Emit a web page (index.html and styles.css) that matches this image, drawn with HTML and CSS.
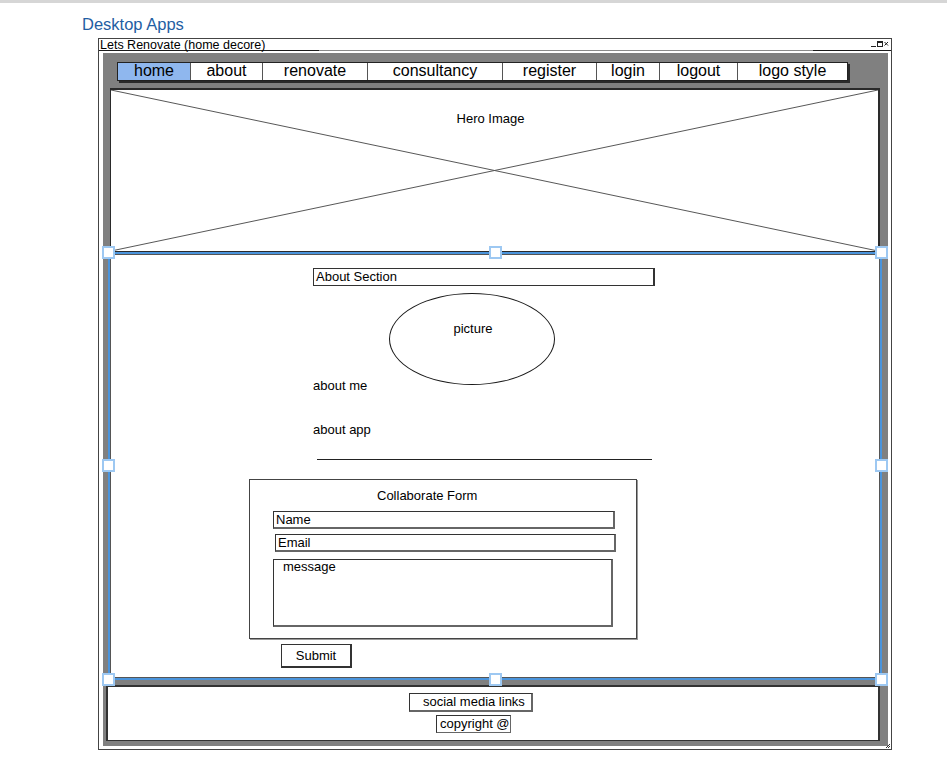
FILE: index.html
```html
<!DOCTYPE html>
<html>
<head>
<meta charset="utf-8">
<link rel="stylesheet" href="styles.css">
</head>
<body>
<div class="topbar"></div>
<div class="page">
  <h1 class="heading">Desktop Apps</h1>
  <div class="window">
    <div class="titlebar">
      <span class="title">Lets Renovate (home decore)</span>
      <svg class="controls" width="18" height="8" viewBox="0 0 18 8">
        <rect x="0" y="6" width="5" height="1" fill="#222"/>
        <rect x="6.5" y="1.5" width="5" height="5" fill="none" stroke="#222" stroke-width="1"/>
        <rect x="6" y="1" width="6" height="2" fill="#222"/>
        <path d="M13.5 2 L17 5.5 M17 2 L13.5 5.5" stroke="#222" stroke-width="1"/>
      </svg>
    </div>
    <div class="canvas">
      <nav class="nav">
        <span class="nav-item active">home</span>
        <span class="nav-item">about</span>
        <span class="nav-item">renovate</span>
        <span class="nav-item">consultancy</span>
        <span class="nav-item">register</span>
        <span class="nav-item">login</span>
        <span class="nav-item">logout</span>
        <span class="nav-item">logo style</span>
      </nav>
      <div class="hero">
        <svg class="hero-x" viewBox="0 0 770 164" preserveAspectRatio="none">
          <line x1="0" y1="0" x2="770" y2="164" stroke="#555" stroke-width="1"/>
          <line x1="770" y1="0" x2="0" y2="164" stroke="#555" stroke-width="1"/>
        </svg>
        <span class="hero-label">Hero Image</span>
      </div>
      <section class="main">
        <span class="handle h-tl"></span>
        <span class="handle h-tc"></span>
        <span class="handle h-tr"></span>
        <span class="handle h-ml"></span>
        <span class="handle h-mr"></span>
        <span class="handle h-bl"></span>
        <span class="handle h-bc"></span>
        <span class="handle h-br"></span>
        <div class="about-box">About Section</div>
        <div class="picture"><span>picture</span></div>
        <div class="about-me">about me</div>
        <div class="about-app">about app</div>
        <div class="rule"></div>
        <div class="form">
          <div class="form-title">Collaborate Form</div>
          <div class="field f-name">Name</div>
          <div class="field f-email">Email</div>
          <div class="field f-message">message</div>
        </div>
        <div class="submit">Submit</div>
      </section>
      <footer class="footer">
        <div class="social">social media links</div>
        <div class="copyright">copyright @</div>
      </footer>
    </div>
    <svg class="grip" width="6" height="6" viewBox="0 0 6 6">
      <path d="M1 5 L5 1 M3 5 L5 3" stroke="#333" stroke-width="1"/>
    </svg>
  </div>
</div>
</body>
</html>
```
FILE: styles.css
```css
* { box-sizing: border-box; }
html, body { margin: 0; padding: 0; background: #fff; }
body {
  font-family: "Liberation Sans", Arial, sans-serif;
  color: #111;
  width: 947px;
  height: 760px;
  overflow: hidden;
}
.topbar { height: 3px; background: #d6d6d6; }
.page { padding-left: 82px; }
.heading {
  margin: 11px 0 0 0;
  font-size: 16.5px;
  line-height: 20px;
  font-weight: normal;
  color: #1f5ea3;
  height: 20px;
}
.window {
  position: relative;
  margin: 4px 0 0 16px;
  width: 794px;
  height: 712px;
  border: 1px solid #444;
  background: #fff;
}
.titlebar {
  height: 12px;
  display: flex;
  justify-content: space-between;
  align-items: flex-start;
  background: linear-gradient(to right, #1a1a1a 0 220px, #8a8a8a 220px 714px, #1a1a1a 714px) bottom / 100% 1px no-repeat;
}
.title {
  font-size: 12.5px;
  line-height: 12px;
  margin-top: 0;
  padding-left: 1px;
  color: #000;
}
.controls { margin: 1px 2px 0 0; }
.canvas {
  margin: 2px 3px 0 4px;
  height: 693px;
  background: #808080;
  padding-top: 9px;
  display: flex;
  flex-direction: column;
  align-items: flex-start;
}
.nav {
  margin-left: 14px;
  display: grid;
  grid-template-columns: 72px 72px 105px 135px 94px 63px 78px 110px;
  height: 19px;
  border: 1px solid #222;
  background: #fff;
  box-shadow: 2px 2px 0 #2a2a2a;
}
.nav-item {
  font-size: 16px;
  line-height: 16px;
  text-align: center;
  border-left: 1px solid #555;
  color: #000;
}
.nav-item:first-child { border-left: none; }
.nav-item.active { background: #8fb7ee; }
.hero {
  position: relative;
  margin: 7px 0 0 7px;
  width: 770px;
  height: 164px;
  background: #fff;
  border-top: 2px solid #2a2a2a;
  border-left: 1px solid #2a2a2a;
  border-right: 2px solid #2a2a2a;
  border-bottom: 1px solid #2a2a2a;
  display: flex;
  justify-content: center;
}
.hero-x {
  position: absolute;
  left: 0; top: 0;
  width: 100%;
  height: 100%;
}
.hero-label {
  position: relative;
  font-size: 13px;
  line-height: 16px;
  margin-top: 21px;
  margin-right: 8px;
  color: #000;
}
.main {
  position: relative;
  margin-left: 5px;
  width: 774px;
  height: 428px;
  background: #fff;
  border: 2px solid #4a94dc;
  box-shadow: inset 0 0 0 1px #555;
  padding-top: 14px;
  display: flex;
  flex-direction: column;
  align-items: flex-start;
  font-size: 13px;
  line-height: 16px;
  color: #000;
}
.handle {
  position: absolute;
  width: 13px;
  height: 13px;
  background: #fff;
  border: 2px solid #9dc8f2;
  z-index: 2;
}
.h-tl { left: -8px; top: -8px; }
.h-tc { left: 379px; top: -8px; }
.h-tr { right: -8px; top: -8px; }
.h-ml { left: -8px; top: 205px; }
.h-mr { right: -8px; top: 205px; }
.h-bl { left: -8px; bottom: -8px; }
.h-bc { left: 379px; bottom: -8px; }
.h-br { right: -8px; bottom: -8px; }
.about-box {
  margin-left: 203px;
  width: 342px;
  height: 18px;
  border: 1px solid #333;
  border-right-width: 2px;
  padding-left: 2px;
  line-height: 16px;
}
.picture {
  margin: 7px 0 0 279px;
  width: 166px;
  height: 92px;
  border: 1.6px solid #1a1a1a;
  border-radius: 50%;
  text-align: center;
  padding-top: 27px;
}
.picture span { position: relative; left: 1px; }
.about-me { margin: -7px 0 0 203px; }
.about-app { margin: 28px 0 0 203px; }
.rule {
  margin: 21px 0 0 207px;
  width: 335px;
  height: 1px;
  background: #222;
}
.form {
  margin: 19px 0 0 139px;
  width: 388px;
  height: 160px;
  border: 1px solid #444;
  box-shadow: 1px 1px 0 #999;
  padding-top: 8px;
  display: flex;
  flex-direction: column;
  align-items: flex-start;
}
.form-title { margin-left: 127px; }
.field {
  border: 1px solid #333;
  border-right-width: 2px;
  border-bottom-width: 2px;
  border-right-color: #666;
  border-bottom-color: #666;
  padding-left: 2px;
  line-height: 15px;
}
.f-name { margin: 7px 0 0 23px; width: 342px; height: 18px; }
.f-email { margin: 5px 0 0 25px; width: 341px; height: 18px; }
.f-message { margin: 7px 0 0 23px; width: 340px; height: 68px; padding-left: 9px; line-height: 14px; }
.submit {
  margin: 5px 0 0 171px;
  width: 71px;
  height: 24px;
  border: 1px solid #333;
  border-right-width: 2px;
  border-bottom-width: 2px;
  text-align: center;
  line-height: 21px;
}
.footer {
  margin: 5px 0 0 3px;
  width: 774px;
  height: 56px;
  background: #fff;
  border: 1px solid #333;
  border-top-width: 2px;
  border-left-width: 2px;
  border-right-width: 2px;
  padding-top: 6px;
  display: flex;
  flex-direction: column;
  align-items: flex-start;
  font-size: 13px;
  line-height: 16px;
  color: #000;
}
.social {
  margin-left: 301px;
  width: 124px;
  height: 19px;
  border: 1px solid #333;
  border-right-width: 2px;
  border-bottom-width: 2px;
  border-right-color: #666;
  border-bottom-color: #666;
  padding-left: 13px;
  line-height: 16px;
}
.copyright {
  margin: 3px 0 0 328px;
  width: 75px;
  height: 18px;
  border: 1px solid #333;
  border-right-color: #666;
  border-bottom-color: #666;
  padding-left: 3px;
  line-height: 15px;
}
.grip {
  position: absolute;
  right: 0;
  bottom: 0;
}
```
